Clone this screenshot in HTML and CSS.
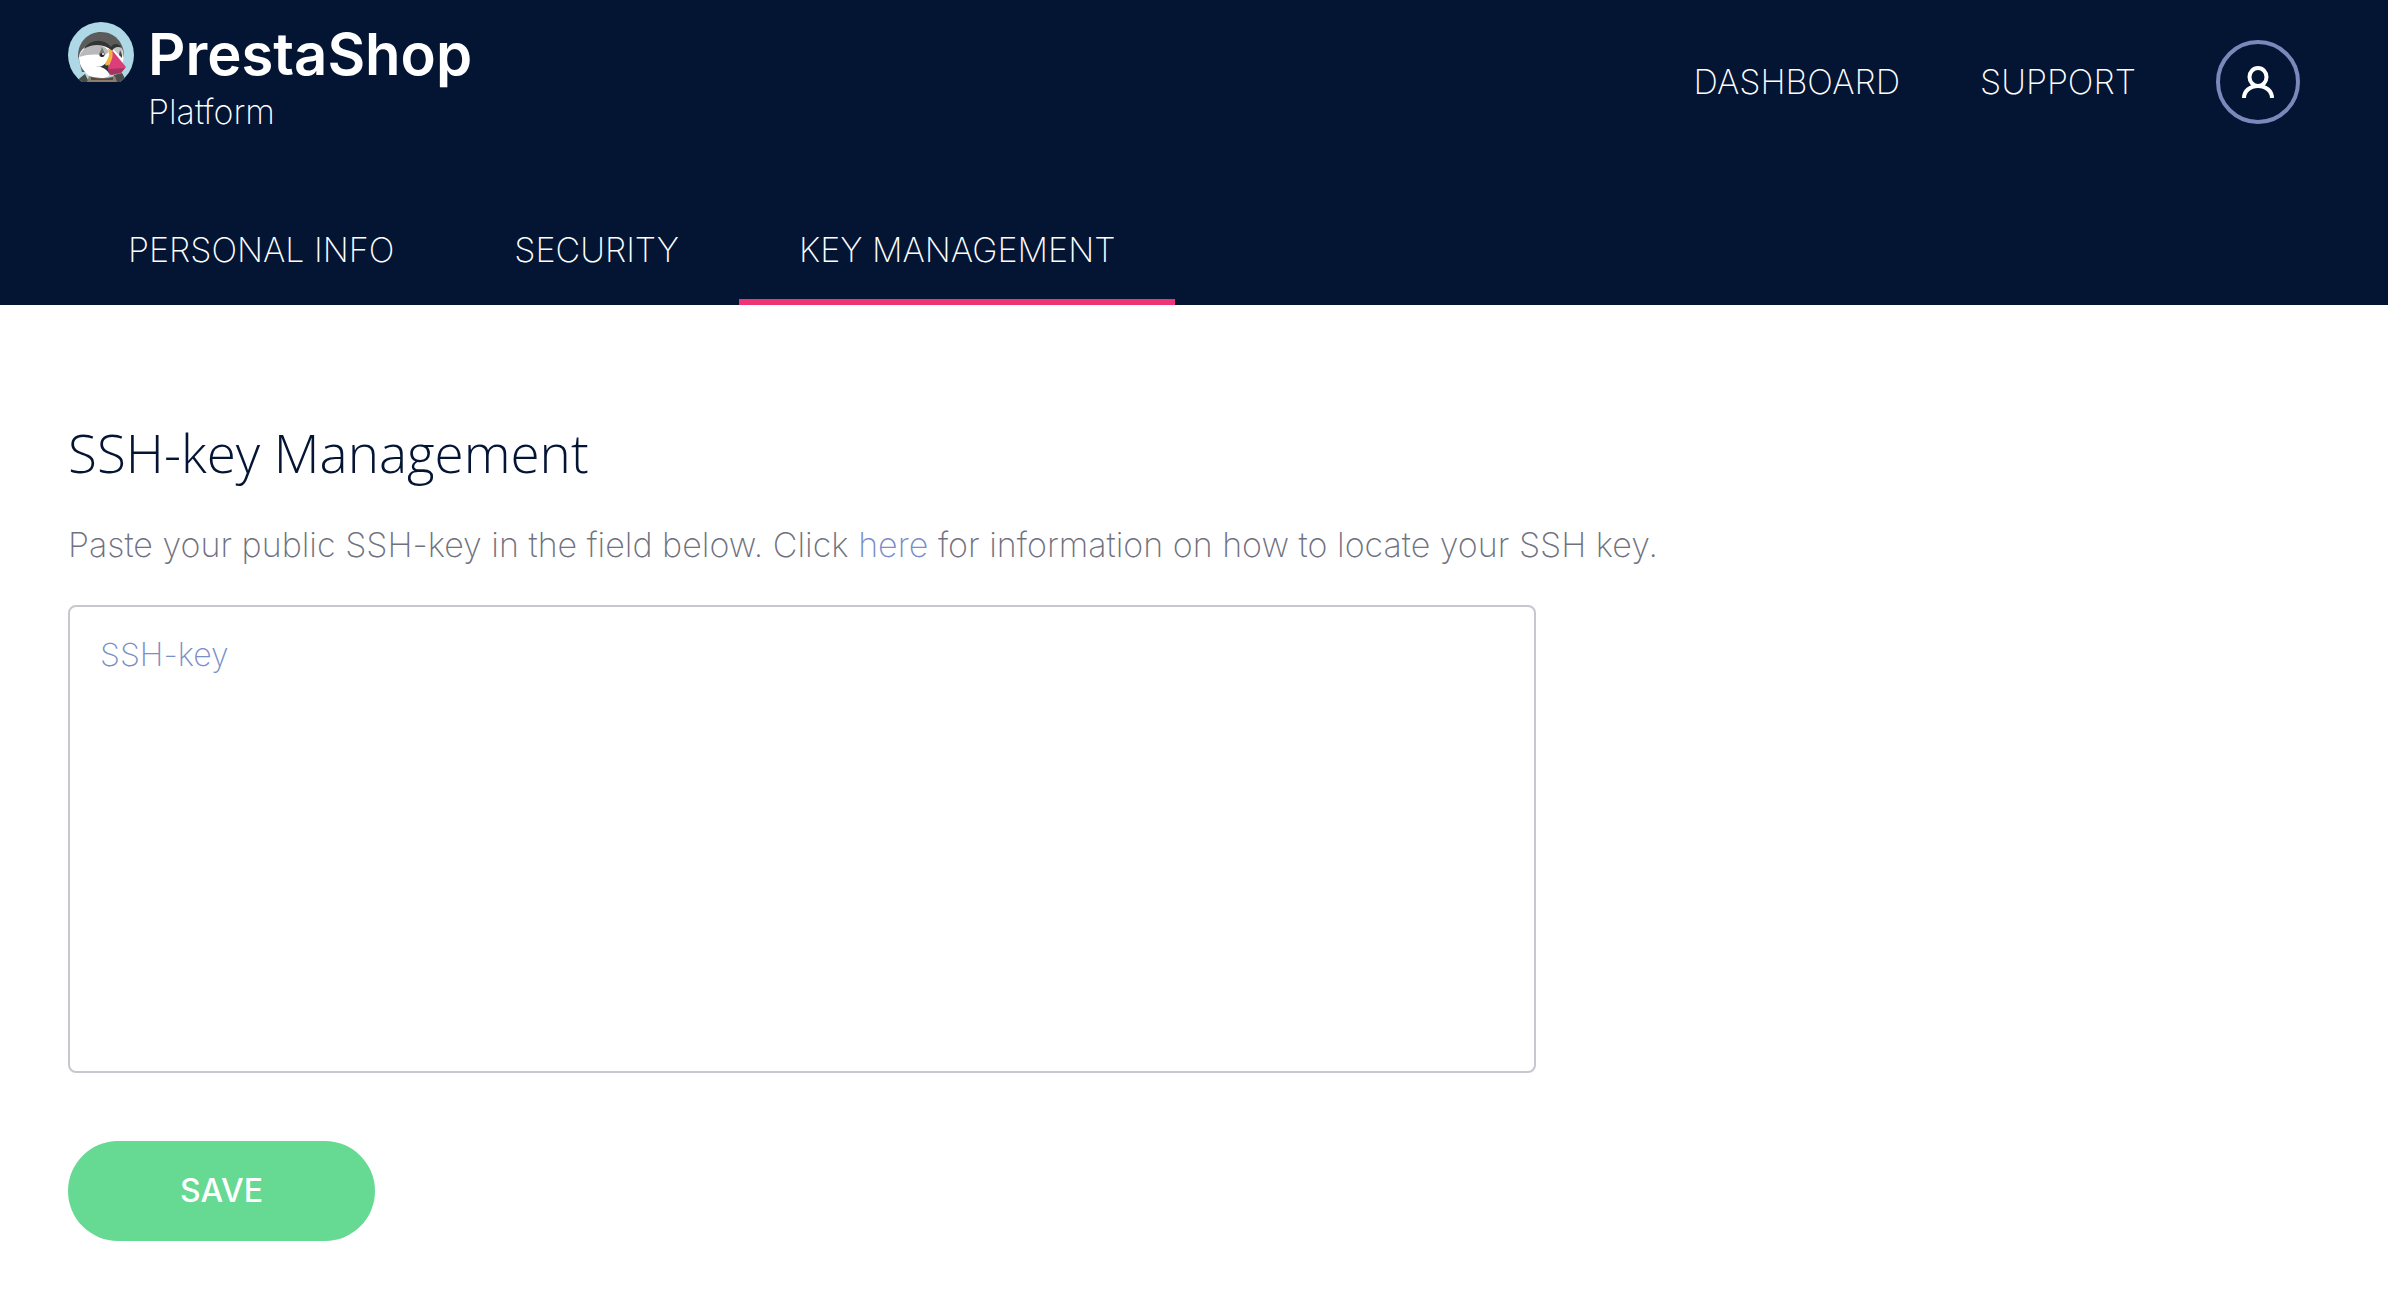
FILE: index.html
```html
<!DOCTYPE html>
<html lang="en">
<head>
    <meta charset="UTF-8">
    <meta name="viewport" content="width=device-width, initial-scale=1.0">
    <title>Key Management - PrestaShop Platform</title>
    <link rel="stylesheet" href="styles.css">
</head>
<body>
    <header class="header">
        <div class="topbar">
            <a href="#" class="brand">
                <svg class="brand-logo" viewBox="0 0 66 60" aria-hidden="true">
                    <clipPath id="badge"><circle cx="33" cy="33" r="33"/></clipPath>
                    <g clip-path="url(#badge)">
                        <rect width="66" height="60" fill="#aed8e5"/>
                        <path d="M10 34C10 20 20 10 33 10c14 0 23 11 23 24L46 50H14z" fill="#5a5b5a"/>
                        <path d="M17 52L7 60h14zM46 53l8-2 5 9H44z" fill="#4a4b4b"/>
                        <path d="M11 35c1-9 9-13 19-13 6 0 11 2 14 6 2-4 5-5 8-3 4 3 4 9 3 15L42 53c-6 5-15 5-22 0C14 48 11 42 11 35z" fill="#fff"/>
                        <path d="M11 35c3-8 10-13 18-12 5 0 10 3 12 7l-4 3c-9-1-18-1-26 2z" fill="#b9b9bb"/>
                        <path d="M45 27c2-5 7-5 9 0 1 3 1 5 0 8l-4-3z" fill="#c4c4c6"/>
                        <path d="M16 27c6-10 20-11 27-2 2-4 8-4 11 1-4-2-8-1-10 3-7-7-19-8-28-2z" fill="#333434"/>
                        <path d="M34 25l3 7a3 3 0 1 1-6 0c1-2 2-4 3-7z" fill="#777"/>
                        <circle cx="34" cy="33" r="2" fill="#222"/>
                        <circle cx="35" cy="32" r="1" fill="#fff"/>
                        <path d="M52 28l2 5v3l-3-3z" fill="#444"/>
                        <path d="M28 44c5 2 8-1 12-5l2 15c-1-5-6-9-14-10z" fill="#333434"/>
                        <path d="M40 27c8 1 6 10 1 15-3 3-5 1-3-2 3-5 4-8 2-13z" fill="#f7b23b"/>
                        <path d="M44 28l14 17-5 6-10 2c-4-4-3-8-1-12 3-5 3-9 2-13z" fill="#dc3f78"/>
                        <path d="M41 47l16-1-4 5-10 2c-2-2-3-4-2-6z" fill="#a23661"/>
                        <path d="M21 54c7 2 17 3 26 0l2 6H19z" fill="#8f7d6c"/>
                        <path d="M23 55v3h22v-3c-7 2-15 2-22 0z" fill="#554b45"/>
                    </g>
                </svg>
                <span class="brand-text">
                    <span class="brand-name">PrestaShop</span>
                    <span class="brand-sub">Platform</span>
                </span>
            </a>
            <nav class="menu">
                <a href="#">DASHBOARD</a>
                <a href="#">SUPPORT</a>
                <button type="button" class="account" aria-label="Account">
                    <svg viewBox="0 0 32 32" width="32" height="32" fill="none" stroke="#fff" stroke-width="4">
                        <ellipse cx="16" cy="11" rx="8.500" ry="9"/>
                        <path d="M2 32C2 25 8 20 16 20s14 5 14 12"/>
                    </svg>
                </button>
            </nav>
        </div>
        <nav class="tabs">
            <a href="#" class="tab">PERSONAL INFO</a>
            <a href="#" class="tab">SECURITY</a>
            <a href="#" class="tab active">KEY MANAGEMENT</a>
        </nav>
    </header>
    <main class="content">
        <h1>SSH-key Management</h1>
        <p><label for="sshKey">Paste your public SSH-key in the field below.</label> Click <a href="#">here</a> for information on how to locate your SSH key.</p>
        <form>
            <textarea id="sshKey" class="key-input" placeholder="SSH-key"></textarea>
            <button type="submit" class="save-btn">SAVE</button>
        </form>
    </main>
</body>
</html>
```
FILE: styles.css
```css
* {
    box-sizing: border-box;
}
body {
    margin: 0;
    background-color: #fff;
    color: #70717f;
    font-family: Inter, sans-serif;
    font-size: 34px;
    font-weight: 200;
    line-height: 40px;
}
a {
    color: #7a8fc8;
    text-decoration: none;
}
.header {
    background-color: #041534;
    padding: 0 68px;
}
.header a {
    color: #fff;
}
.topbar {
    display: flex;
    justify-content: space-between;
    align-items: flex-start;
    height: 200px;
    padding: 22px 20px 0 0;
}
.brand {
    display: flex;
    gap: 14px;
}
.brand-logo {
    width: 66px;
    height: 60px;
}
.brand-text {
    display: flex;
    flex-direction: column;
    gap: 6px;
}
.brand-name {
    font-size: 58px;
    font-weight: 600;
    line-height: 64px;
}
.menu {
    display: flex;
    align-items: center;
    gap: 80px;
    padding-top: 18px;
}
.account {
    display: flex;
    align-items: center;
    justify-content: center;
    width: 84px;
    height: 84px;
    padding: 0;
    background: none;
    border: 4px solid #7a89bb;
    border-radius: 50%;
    cursor: pointer;
}
.tabs {
    display: flex;
}
.tab {
    padding: 30px 60px 29px;
    border-bottom: 6px solid transparent;
}
.tab.active {
    border-bottom-color: #ee3377;
}
.content {
    padding: 114px 68px 55px;
}
h1 {
    margin: 0;
    color: #041534;
    font-family: "Open Sans", sans-serif;
    font-size: 53px;
    font-weight: 300;
    line-height: 68px;
}
p {
    margin: 38px 0 40px;
}
.key-input {
    display: block;
    width: 100%;
    max-width: 1468px;
    height: 468px;
    padding: 28px 30px;
    border: 2px solid #c8c7d0;
    border-radius: 8px;
    color: #041534;
    font: inherit;
    font-size: 32px;
    resize: none;
}
.key-input::placeholder {
    color: #7a8fc8;
}
.save-btn {
    display: block;
    min-width: 307px;
    height: 100px;
    margin-top: 68px;
    background-color: #66d993;
    border: none;
    border-radius: 50px;
    color: #fff;
    font: inherit;
    font-size: 32px;
    font-weight: 500;
    cursor: pointer;
}
```
